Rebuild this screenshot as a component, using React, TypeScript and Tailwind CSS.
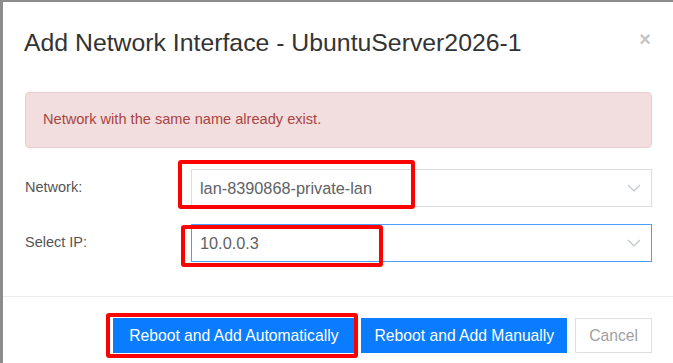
import React from 'react';

interface SelectRowProps {
  label: string;
  value: string;
  focused?: boolean;
  mark: { top: number; left: number; width: number; height: number };
}

const Chevron: React.FC = () => (
  <svg width="14" height="8" viewBox="0 0 14 8" fill="none" className="shrink-0">
    <path d="M1 1l6 6 6-6" stroke="#c0c4cc" strokeWidth="1.2" />
  </svg>
);

const SelectRow: React.FC<SelectRowProps> = ({ label, value, focused, mark }) => (
  <div className="flex items-center h-[38px]">
    <label className="w-[166px] text-[14.5px] text-[#555]">{label}</label>
    <div className="relative flex-1">
      <div
        className={
          focused
            ? 'flex items-center justify-between h-[38px] border border-[#4a9eff] pl-[8px] pr-[10px]'
            : 'flex items-center justify-between h-[38px] border border-[#dcdcdc] pl-[8px] pr-[10px]'
        }
      >
        <span className="text-[16.3px] text-[#606266]">{value}</span>
        <Chevron />
      </div>
      {/* red annotation box */}
      <div
        className="absolute border-4 border-[#ff0000] rounded-[3px]"
        style={{ top: mark.top, left: mark.left, width: mark.width, height: mark.height }}
      />
    </div>
  </div>
);

export default function App() {
  return (
    <div
      className="w-[673px] h-[363px] overflow-hidden bg-white border-l-[3px] border-t-[2px] border-[#8c8c8c]"
      style={{ fontFamily: '"Liberation Sans", Arial, sans-serif' }}
    >
      {/* Header */}
      <div className="flex items-start justify-between pl-[21px] pr-[22px] pt-[26px]">
        <h4 className="text-[24.8px] leading-[30px] text-[#333]">
          Add Network Interface - UbuntuServer2026-1
        </h4>
        <span className="text-[20px] leading-[20px] font-bold text-[#c4c4c4] mt-[1px]">×</span>
      </div>

      {/* Body */}
      <div className="pl-[22px] pr-[21px] pt-[34px]">
        <div className="h-[56px] flex items-center px-[17px] bg-[#f2dede] border border-[#ebccd1] rounded-[4px] text-[14.6px] text-[#a94442]">
          Network with the same name already exist.
        </div>

        <div className="mt-[21px] flex flex-col gap-[17px]">
          <SelectRow
            label="Network:"
            value="lan-8390868-private-lan"
            mark={{ top: -9, left: -13, width: 237, height: 49 }}
          />
          <SelectRow
            label="Select IP:"
            value="10.0.0.3"
            focused
            mark={{ top: 1, left: -10, width: 202, height: 42 }}
          />
        </div>
      </div>

      {/* Footer */}
      <div className="mt-[34px] border-t border-[#ececec] flex justify-end pr-[21px] pt-[21px]">
        <div className="relative">
          <button className="h-[35px] px-[16px] bg-[#0a7cff] text-white text-[15.7px]">
            Reboot and Add Automatically
          </button>
          <div className="absolute -top-[5px] -left-[7px] -right-[4px] -bottom-[5px] border-4 border-[#ff0000] rounded-[3px]" />
        </div>
        <button className="h-[35px] ml-[7px] px-[13px] bg-[#0a7cff] text-white text-[15.7px]">
          Reboot and Add Manually
        </button>
        <button className="h-[35px] ml-[8px] px-[13px] bg-white border border-[#dcdfe6] text-[#a0a0a0] text-[15.7px]">
          Cancel
        </button>
      </div>
    </div>
  );
}
